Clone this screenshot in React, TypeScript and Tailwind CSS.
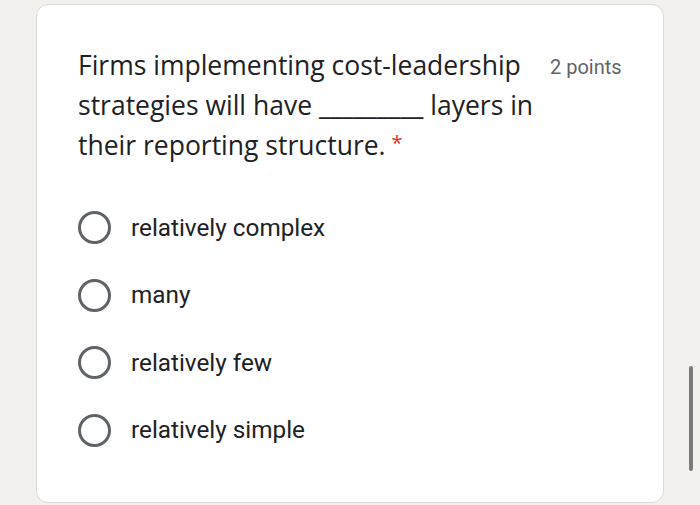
export default function App() {
  const options = ["relatively complex", "many", "relatively few", "relatively simple"]

  return (
    <div className="relative h-[505px] w-[700px] overflow-hidden bg-[#f3f1ee] pl-[36px] pt-[4px]">
      {/* question card */}
      <div className="h-[499px] w-[628px] rounded-[12px] border border-[#dcdad7] bg-white pl-[41px] pt-[40px]">
        <div className="flex items-start">
          <div className="w-[460px] whitespace-nowrap font-['Open_Sans',sans-serif] text-[26.5px] leading-[40px] text-[#202124]">
            Firms implementing cost-leadership
            <br />
            strategies will have _________ layers in
            <br />
            their reporting structure.
            <span className="ml-[6px] align-top text-[20px] leading-[36px] text-[#d93025]">*</span>
          </div>
          <div className="ml-[12px] mt-[10px] font-['Roboto',sans-serif] text-[20px] leading-[24px] text-[#5f6368]">
            2 points
          </div>
        </div>

        <div className="mt-[29px] flex flex-col">
          {options.map((opt) => (
            <div key={opt} className="flex h-[67.5px] items-center">
              <div className="h-[33px] w-[33px] rounded-full border-[3px] border-[#5f6368]" />
              <span className="ml-[20px] font-['Roboto',sans-serif] text-[24.3px] text-[#202124]">{opt}</span>
            </div>
          ))}
        </div>
      </div>

      {/* scroll indicator */}
      <div className="absolute left-[689px] top-[366px] h-[105px] w-[4px] rounded-full bg-[#7b7979]" />
    </div>
  )
}
